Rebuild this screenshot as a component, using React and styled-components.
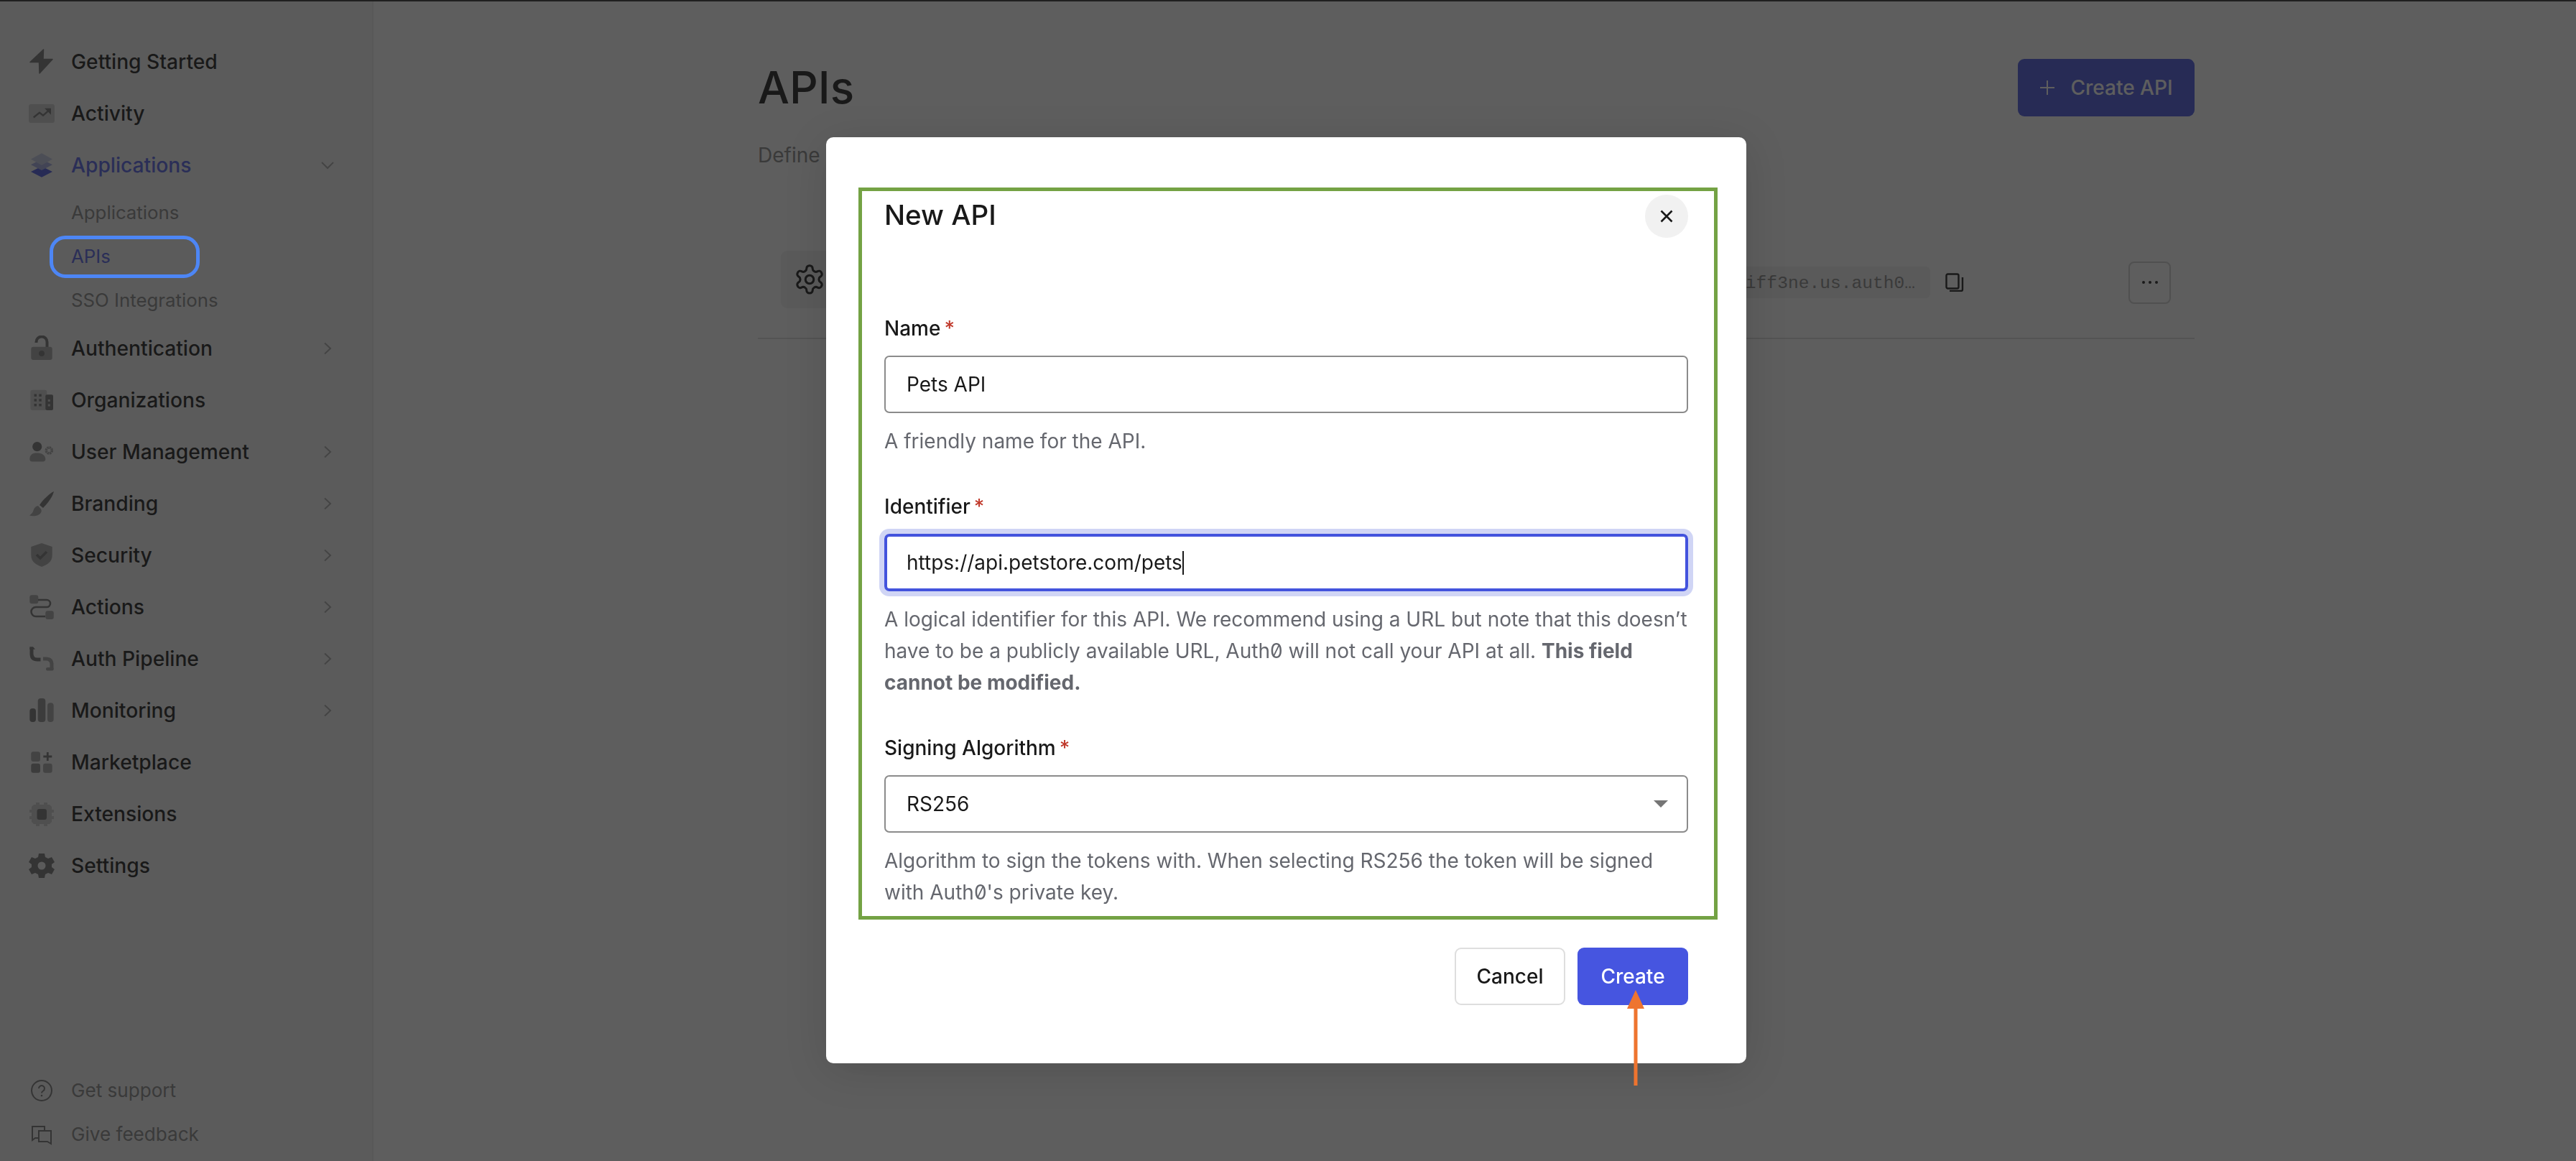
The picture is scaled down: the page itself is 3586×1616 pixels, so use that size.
import React from "react";
import styled, { createGlobalStyle } from "styled-components";

const GlobalStyle = createGlobalStyle`
  *, *::before, *::after { box-sizing: border-box; }
  html, body { margin: 0; padding: 0; background: #fff; }
  body {
    font-family: Inter, "Noto Sans", sans-serif;
    color: #191919;
    font-variant-numeric: slashed-zero;
  }
`;

const Page = styled.div`
  display: flex;
  width: 3586px;
  height: 1616px;
  overflow: hidden;
`;

const Sidebar = styled.aside`
  display: flex;
  flex-direction: column;
  justify-content: space-between;
  width: 520px;
  height: 100%;
  padding: 50px 0 6px;
  background: #f5f5f5;
  border-right: 2px solid #ececec;
`;

const NavRow = styled.div`
  display: flex;
  align-items: center;
  height: 72px;
  padding: 0 52px 0 40px;
  font-size: 28.2px;
  font-weight: 500;
  color: ${(p) => (p.$active ? "#5360e6" : "#191919")};

  & > span {
    margin-top: -1px;
  }
`;

const NavIcon = styled.svg`
  flex: none;
  width: 36px;
  height: 36px;
  margin-right: 23px;
`;

const Chevron = styled.svg`
  flex: none;
  width: 20px;
  height: 20px;
  margin-left: auto;
  fill: none;
  stroke: #a8a8a8;
  stroke-width: 2;
`;

const SubRow = styled.div`
  position: relative;
  display: flex;
  align-items: center;
  height: 61px;
  padding: 0 0 2px 99px;
  font-size: 25.8px;
  color: ${(p) => (p.$active ? "#5360e6" : "#868686")};

  ${(p) =>
    p.$ringed &&
    `&::after {
      content: "";
      position: absolute;
      z-index: 30;
      left: 69px;
      top: 1px;
      width: 209px;
      height: 59px;
      border: 5px solid #4d86f5;
      border-radius: 22px;
    }`}
`;

const FootRow = styled(SubRow)`
  padding-left: 40px;
  font-size: 26.1px;
`;

const Main = styled.main`
  flex: 1;
  padding: 0 0 0 535px;
`;

const Content = styled.div`
  width: 2000px;
`;

const TitleBar = styled.div`
  display: flex;
  align-items: center;
  justify-content: space-between;
  padding-top: 82px;
`;

const PageTitle = styled.h1`
  margin: 0;
  font-size: 62px;
  font-weight: 500;
  line-height: 80px;
`;

const PrimaryButton = styled.button`
  display: flex;
  align-items: center;
  justify-content: center;
  gap: 21px;
  width: ${(p) => p.$width};
  height: 80px;
  border: 0;
  border-radius: 9px;
  background: #4655e0;
  color: #fff;
  font: 500 28px Inter, sans-serif;
`;

const Intro = styled.p`
  margin: 32px 0 0;
  font-size: 28px;
  line-height: 44px;
  color: #868686;
`;

const ApiRow = styled.div`
  display: flex;
  align-items: center;
  height: 164px;
  margin-top: 70px;
  padding: 8px 33px 0 32px;
  border-bottom: 2px solid #dcdcdc;
`;

const GearTile = styled.div`
  display: flex;
  align-items: center;
  justify-content: center;
  width: 80px;
  height: 80px;
  margin-bottom: 8px;
  border-radius: 9px;
  background: #f1f1f1;
`;

const ChipSlot = styled.div`
  display: flex;
  align-items: center;
  gap: 21px;
  margin-left: auto;
  margin-right: 229px;
`;

const Chip = styled.code`
  height: 44px;
  padding: 0 21px;
  border-radius: 6px;
  background: #f1f1f1;
  font: 400 24.6px/48px "Liberation Mono", monospace;
  color: #868686;
  white-space: nowrap;
`;

const DotsButton = styled.div`
  display: flex;
  align-items: center;
  justify-content: center;
  gap: 5px;
  width: 59px;
  height: 59px;
  border: 2px solid #cfcfcf;
  border-radius: 8px;
`;

const Dot = styled.span`
  width: 4px;
  height: 4px;
  border-radius: 50%;
  background: #191919;
`;

const Overlay = styled.div`
  position: fixed;
  inset: 0;
  z-index: 10;
  display: flex;
  justify-content: center;
  align-items: flex-start;
  padding: 191px 5px 0 0;
  background: rgba(25, 25, 25, 0.7);
  border-top: 2px solid #1f1f1f;
`;

const Modal = styled.div`
  position: relative;
  width: 1281px;
  height: 1289px;
  margin-top: -2px;
  padding: 70px 40px 0 45px;
  border-radius: 10px;
  background: #fff;
  box-shadow: 0 10px 60px rgba(0, 0, 0, 0.14);
`;

const Annotated = styled.div`
  height: 1019px;
  padding: 5px 36px 0 31px;
  border: 5px solid #74a244;
`;

const ModalHeader = styled.div`
  display: flex;
  align-items: center;
  justify-content: space-between;
  height: 60px;
  margin-bottom: 104px;
`;

const ModalTitle = styled.h2`
  margin: -5px 0 0;
  font-size: 38.5px;
  font-weight: 500;
  line-height: 56px;
`;

const CloseButton = styled.div`
  display: flex;
  align-items: center;
  justify-content: center;
  width: 60px;
  height: 60px;
  border-radius: 50%;
  background: #f1f1f1;
`;

const FieldBlock = styled.div`
  margin-bottom: 47px;
`;

const Label = styled.div`
  margin-bottom: 16px;
  font-size: 28px;
  font-weight: 500;
  line-height: 44px;
`;

const Required = styled.span`
  margin-left: 5px;
  color: #c0392b;
`;

const Field = styled.div`
  display: flex;
  align-items: center;
  justify-content: space-between;
  height: 80px;
  padding: 0 ${(p) => (p.$focused ? "30px" : "26px")} 0 ${(p) => (p.$focused ? "27px" : "29px")};
  border: ${(p) => (p.$focused ? "4px solid #4353dd" : "2px solid #8b8b8b")};
  border-radius: 7px;
  box-shadow: ${(p) => (p.$focused ? "0 0 0 7px #d0d5f5" : "none")};
  font-size: 28px;
`;

const FieldValue = styled.span`
  display: flex;
  align-items: center;
`;

const Caret = styled.span`
  width: 2px;
  height: 33px;
  background: #191919;
`;

const Help = styled.p`
  margin: 17px 0 0;
  font-size: 28px;
  line-height: 44px;
  color: #65676e;

  strong {
    font-weight: 700;
  }
`;

const ModalFooter = styled.div`
  display: flex;
  justify-content: flex-end;
  gap: 17px;
  margin-top: 39px;
  padding-right: 41px;
`;

const GhostButton = styled.button`
  width: 154px;
  height: 80px;
  border: 2px solid #dedede;
  border-radius: 9px;
  background: #fff;
  color: #191919;
  font: 500 28px Inter, sans-serif;
`;

const Arrow = styled.svg`
  position: absolute;
  left: 1113px;
  top: 1187px;
  width: 28px;
  height: 133px;
`;

const D = "#747474";
const M = "#a6a6a6";
const L = "#cdcdcd";

const icons = {
  bolt: <path fill={D} stroke={D} strokeWidth="1.5" strokeLinejoin="round" d="M20.5 1 2 18.500h12.500L15 34 33 14.500H20z" />,
  activity: (
    <>
      <rect x="0" y="5" width="36" height="26" rx="3" fill={L} />
      <path fill="none" stroke={D} strokeWidth="2.4" d="M6.700 23.500 15 16.700l5 4 8-7" />
      <path fill={D} d="M22 10.700h9v9z" />
    </>
  ),
  layers: (
    <>
      <path fill="#4655e0" d="M18 19.500 33 27l-15 7.700L3 27z" />
      <path fill="#a0a8e0" d="M18 9.500l15 7.800-15 7.700-15-7.700z" />
      <path fill="#c4c8e4" d="M18 1.300l15 8.200L18 18 3 9.500z" />
    </>
  ),
  lock: (
    <>
      <path fill="none" stroke={D} strokeWidth="4" d="M10.500 10V9a7.500 7.500 0 0 1 15 0v7" />
      <rect x="3.300" y="15.700" width="29.400" height="18.300" rx="3" fill={M} />
      <circle cx="18" cy="25" r="4" fill={D} />
    </>
  ),
  org: (
    <>
      <rect x="2.300" y="3.700" width="23" height="28.300" rx="3" fill={L} />
      <rect x="23.300" y="10.300" width="10.700" height="21.700" rx="2" fill={D} />
      <path
        fill={D}
        d="M7.500 9.500h3.500V13H7.500zM14.300 9.500h3.500V13h-3.500zM7.500 16.300h3.500v3.500H7.500zM14.300 16.300h3.500v3.500h-3.500zM7.500 23h3.500v3.500H7.500zM14.300 23h3.500v3.500h-3.500z"
      />
      <path fill={L} d="M26.800 17h3v3h-3zM26.800 23.500h3v3h-3z" />
    </>
  ),
  users: (
    <>
      <circle cx="11.700" cy="10.700" r="6.600" fill={D} />
      <path fill={M} d="M1.300 28c0-6 4-8.500 10-8.500s12 2.500 12 8.500c0 2-1.300 3.500-3.300 3.500H4.500c-2 0-3.200-1.500-3.200-3.500z" />
      <circle cx="28.300" cy="16" r="4" fill="none" stroke={M} strokeWidth="3.600" strokeDasharray="2.400 .7" />
    </>
  ),
  brush: (
    <>
      <path fill={D} d="M35 1c-6 3-15 11-20 19l5 4C26 18 33 9 35 1z" />
      <path fill={M} d="M13 21c-5 1-6 5-7 8-1 2-3 4-5 5.500 5 1.500 13 1 16-4 1-2 1-3 0-5z" />
    </>
  ),
  shield: (
    <>
      <path fill={M} d="M18 1 3.300 6v12c0 9 7 13 14.700 16 7.700-3 14.700-7 14.700-16V6z" />
      <path fill="none" stroke={D} strokeWidth="3.600" d="M11 17l5 5 9-9" />
    </>
  ),
  actions: (
    <>
      <rect x="1.300" y="1.300" width="12" height="12" rx="3" fill={M} />
      <rect x="23.300" y="23.300" width="11.500" height="11.700" rx="3" fill={M} />
      <path fill="none" stroke={D} strokeWidth="2.600" d="M13 8h12a5 5 0 0 1 0 10H10a6.500 6.500 0 0 0 0 13h13" />
    </>
  ),
  pipeline: (
    <>
      <path fill="none" stroke={D} strokeWidth="5" d="M4 3v8q0 8 8 8h4.500" />
      <path fill={D} d="M1.300 1.300H6l3 3.500H1.300z" />
      <path fill="none" stroke={M} strokeWidth="5" d="M20 18h4q8 0 8 8v6" />
      <rect x="24" y="30" width="10.700" height="4.500" rx="2" fill={M} />
    </>
  ),
  bars: (
    <>
      <rect x="1.300" y="15" width="8.700" height="19" rx="4" fill={D} />
      <rect x="12.700" y="1" width="10.600" height="33" rx="4" fill="#8e8e8e" />
      <rect x="26" y="7.300" width="8.700" height="26.700" rx="4" fill={M} />
    </>
  ),
  market: (
    <>
      <rect x="3.300" y="3.200" width="12.700" height="13.800" rx="3" fill={M} />
      <rect x="3.300" y="19.700" width="12.700" height="13" rx="3" fill="#8e8e8e" />
      <rect x="20" y="19.700" width="12.700" height="13" rx="3" fill={M} />
      <path fill="none" stroke={D} strokeWidth="2.800" d="M20.300 10h12M26.300 4v12" />
    </>
  ),
  chip: (
    <>
      <path
        fill={L}
        d="M10 2h5v3h6V2h5v3h3l3 3v4h3v4h-3v5h3v4h-3v4l-3 3h-3v3h-5v-3h-6v3h-5v-3H7l-3-3v-4H1v-4h3v-5H1v-4h3V8l3-3h3z"
      />
      <rect x="11.500" y="11" width="13.500" height="15" rx="3" fill={D} />
    </>
  ),
  gear: (
    <path
      fill={D}
      fillRule="evenodd"
      d="M14 1h8l1 5 4 2 5-2 4 7-4 3v4l4 3-4 7-5-2-4 2-1 5h-8l-1-5-4-2-5 2-4-7 4-3v-4l-4-3 4-7 5 2 4-2zM18 12.500a5.500 5.500 0 1 0 0 11 5.500 5.500 0 0 0 0-11z"
    />
  ),
  help: (
    <>
      <circle cx="18" cy="18" r="14" fill="none" stroke={D} strokeWidth="2" />
      <path fill="none" stroke={D} strokeWidth="2" d="M14 15a4 4 0 1 1 6 3.500c-1.500 1-2 1.500-2 3" />
      <circle cx="18" cy="25" r="1.300" fill={D} />
    </>
  ),
  chat: (
    <>
      <path fill="none" stroke={D} strokeWidth="2" d="M13 23H9l-4 3V7h17v6" />
      <path fill="none" stroke={D} strokeWidth="2" d="M14 13h17v18l-5-3H14z" />
    </>
  ),
};

const Icon = ({ name }) => <NavIcon viewBox="0 0 36 36">{icons[name]}</NavIcon>;

const ChevronRight = () => (
  <Chevron viewBox="0 0 20 20">
    <path d="M6 2.500l8 7.500-8 7.500" />
  </Chevron>
);

const ChevronDown = () => (
  <Chevron viewBox="0 0 20 20">
    <path d="M2 6l8 8 8-8" />
  </Chevron>
);

const beforeGroup = [
  { icon: "bolt", label: "Getting Started" },
  { icon: "activity", label: "Activity" },
];

const afterGroup = [
  { icon: "lock", label: "Authentication", more: true },
  { icon: "org", label: "Organizations" },
  { icon: "users", label: "User Management", more: true },
  { icon: "brush", label: "Branding", more: true },
  { icon: "shield", label: "Security", more: true },
  { icon: "actions", label: "Actions", more: true },
  { icon: "pipeline", label: "Auth Pipeline", more: true },
  { icon: "bars", label: "Monitoring", more: true },
  { icon: "market", label: "Marketplace" },
  { icon: "chip", label: "Extensions" },
  { icon: "gear", label: "Settings" },
];

function Nav() {
  return (
    <Sidebar>
      <div>
        {beforeGroup.map((item) => (
          <NavRow key={item.label}>
            <Icon name={item.icon} />
            <span>{item.label}</span>
          </NavRow>
        ))}
        <NavRow $active>
          <Icon name="layers" />
          <span>Applications</span>
          <ChevronDown />
        </NavRow>
        <SubRow>Applications</SubRow>
        <SubRow $active $ringed>
          APIs
        </SubRow>
        <SubRow>SSO Integrations</SubRow>
        {afterGroup.map((item) => (
          <NavRow key={item.label}>
            <Icon name={item.icon} />
            <span>{item.label}</span>
            {item.more && <ChevronRight />}
          </NavRow>
        ))}
      </div>
      <div>
        <FootRow>
          <Icon name="help" />
          Get support
        </FootRow>
        <FootRow>
          <Icon name="chat" />
          Give feedback
        </FootRow>
      </div>
    </Sidebar>
  );
}

function ApiList() {
  return (
    <Main>
      <Content>
        <TitleBar>
          <PageTitle>APIs</PageTitle>
          <PrimaryButton $width="246px">
            <svg width="22" height="22" viewBox="0 0 22 22" fill="none" stroke="#fff" strokeWidth="2">
              <path d="M11 1v20M1 11h20" />
            </svg>
            Create API
          </PrimaryButton>
        </TitleBar>
        <Intro>Define APIs that can be consumed by applications.</Intro>
        <ApiRow>
          <GearTile>
            <svg width="46" height="46" viewBox="0 0 24 24" fill="none" stroke="#191919" strokeWidth="1.6">
              <path d="M12.200 2h-.4a2 2 0 0 0-2 2v.2a2 2 0 0 1-1 1.700l-.4.300a2 2 0 0 1-2 0l-.2-.1a2 2 0 0 0-2.700.700l-.2.400a2 2 0 0 0 .7 2.700l.2.100a2 2 0 0 1 1 1.700v.5a2 2 0 0 1-1 1.700l-.2.100a2 2 0 0 0-.7 2.700l.2.400a2 2 0 0 0 2.700.700l.2-.1a2 2 0 0 1 2 0l.4.300a2 2 0 0 1 1 1.700v.2a2 2 0 0 0 2 2h.4a2 2 0 0 0 2-2v-.2a2 2 0 0 1 1-1.700l.4-.3a2 2 0 0 1 2 0l.2.100a2 2 0 0 0 2.700-.7l.2-.4a2 2 0 0 0-.7-2.700l-.2-.1a2 2 0 0 1-1-1.700v-.5a2 2 0 0 1 1-1.700l.2-.1a2 2 0 0 0 .7-2.700l-.2-.4a2 2 0 0 0-2.700-.7l-.2.100a2 2 0 0 1-2 0l-.4-.3a2 2 0 0 1-1-1.700V4a2 2 0 0 0-2-2z" />
              <circle cx="12" cy="12" r="3" />
            </svg>
          </GearTile>
          <ChipSlot>
            <Chip>https://dev-iff3ne.us.auth0…</Chip>
            <svg width="26" height="26" viewBox="0 0 26 26" fill="none" stroke="#191919" strokeWidth="2.400">
              <rect x="1.500" y="1.500" width="17" height="20" rx="2" />
              <path d="M24 6v17a2 2 0 0 1-2 2H6" />
            </svg>
          </ChipSlot>
          <DotsButton>
            <Dot />
            <Dot />
            <Dot />
          </DotsButton>
        </ApiRow>
      </Content>
    </Main>
  );
}

function NewApiModal() {
  return (
    <Overlay>
      <Modal>
        <Annotated>
          <ModalHeader>
            <ModalTitle>New API</ModalTitle>
            <CloseButton>
              <svg width="18" height="18" viewBox="0 0 18 18" fill="none" stroke="#191919" strokeWidth="2.600">
                <path d="M1.500 1.500l15 15M16.500 1.500l-15 15" />
              </svg>
            </CloseButton>
          </ModalHeader>
          <FieldBlock>
            <Label>
              Name<Required>*</Required>
            </Label>
            <Field>Pets API</Field>
            <Help>A friendly name for the API.</Help>
          </FieldBlock>
          <FieldBlock>
            <Label>
              Identifier<Required>*</Required>
            </Label>
            <Field $focused>
              <FieldValue>
                https://api.petstore.com/pets
                <Caret />
              </FieldValue>
            </Field>
            <Help>
              A logical identifier for this API. We recommend using a URL but note that this doesn’t have to be a
              publicly available URL, Auth0 will not call your API at all. <strong>This field cannot be modified.</strong>
            </Help>
          </FieldBlock>
          <div>
            <Label>
              Signing Algorithm<Required>*</Required>
            </Label>
            <Field>
              RS256
              <svg width="20" height="10" viewBox="0 0 20 10">
                <path fill="#757575" d="M0 0h20L10 10z" />
              </svg>
            </Field>
            <Help>
              Algorithm to sign the tokens with. When selecting RS256 the token will be signed with Auth0's private
              key.
            </Help>
          </div>
        </Annotated>
        <ModalFooter>
          <GhostButton>Cancel</GhostButton>
          <PrimaryButton $width="154px">Create</PrimaryButton>
        </ModalFooter>
        <Arrow viewBox="0 0 28 133">
          <path fill="#ee742f" d="M14 0l12 26h-9.500v107h-5V26H2z" />
        </Arrow>
      </Modal>
    </Overlay>
  );
}

export default function App() {
  return (
    <>
      <GlobalStyle />
      <Page>
        <Nav />
        <ApiList />
        <NewApiModal />
      </Page>
    </>
  );
}
